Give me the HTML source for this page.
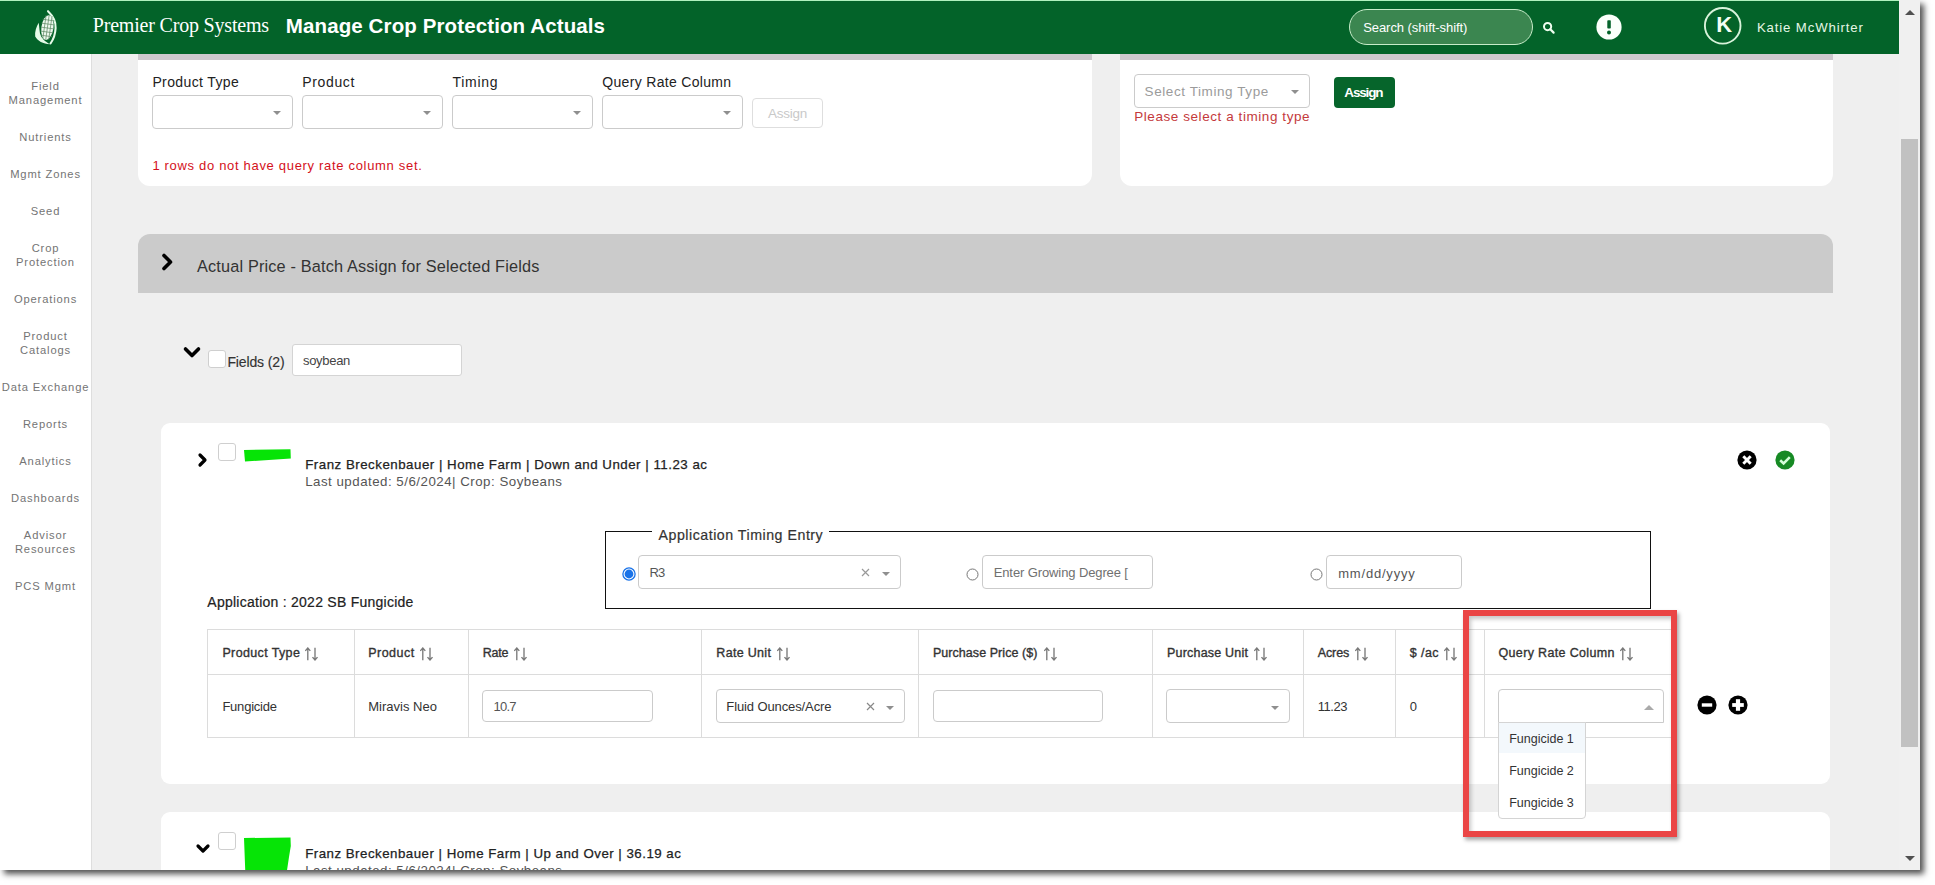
<!DOCTYPE html>
<html><head><meta charset="utf-8">
<style>
*{box-sizing:border-box;margin:0;padding:0}
html,body{width:1935px;height:885px;overflow:hidden;background:#fff;font-family:"Liberation Sans",sans-serif;color:#333}
.a{position:absolute}
.t{position:absolute;white-space:nowrap}
#shot{position:absolute;left:0;top:0;width:1920px;height:870px;background:#efefef;overflow:hidden}
#shadow{position:absolute;left:0;top:0;width:1920px;height:870px;box-shadow:4px 4px 6px rgba(0,0,0,.68)}
.card{position:absolute;background:#fff}
.sel{position:absolute;border:1px solid #cbcbcb;border-radius:4px;background:#fff}
.caret{position:absolute;width:0;height:0;border-left:4px solid transparent;border-right:4px solid transparent;border-top:4px solid #8f8f8f;margin-left:1px;margin-top:1px}
.cb{position:absolute;width:18px;height:18px;border:1px solid #cfcfcf;border-radius:3px;background:#fff}
.vl{position:absolute;top:629px;width:1px;height:109px;background:#dcdcdc}
</style></head><body>
<div id="shadow"></div>
<div id="shot">
  <!-- header -->
  <div class="a" style="left:0;top:0;width:1899px;height:54px;background:#036329;border-top:1px solid #b0f2bf"></div>
  <!-- logo -->
  <svg class="a" style="left:30px;top:8px" width="32" height="40" viewBox="0 0 32 40">
    <path d="M18 3.2 C23 8 26 14 25.6 20 C25.3 27 23 32 20.5 35.5" fill="none" stroke="#e6fbe8" stroke-width="2.1" stroke-linecap="round"/>
    <g transform="rotate(8 17.4 19.6)"><ellipse cx="17.4" cy="19.6" rx="6" ry="12.4" fill="#eef9ef"/>
    <path d="M11.5 12 H23.3 M11 16 H23.8 M11 20 H23.8 M11 24 H23.8 M11.5 28 H23.3 M14.4 7.5 V31.5 M17.4 7.2 V32 M20.4 7.5 V31.5" stroke="#5f8a66" stroke-width="0.7"/></g>
    <path d="M8.7 14.8 C6.2 19 4.6 24 5.2 28.5 C7.5 33 13 35.8 20 36.2 C15 33.5 11.5 30.5 10 25.5 C9.4 22 9.2 18 8.7 14.8 Z" fill="#e6fbe8"/>
  </svg>
  <div class="a" style="left:1349px;top:9px;width:184px;height:36px;border:1.5px solid #c7ecc9;border-radius:18px;background:#3b8650"></div>
  <svg class="a" style="left:1540px;top:19px" width="16" height="16" viewBox="0 0 16 16"><circle cx="7.6" cy="7.6" r="3.6" fill="none" stroke="#f0fff0" stroke-width="2"/><path d="M10.3 10.3 L13.6 13.6" stroke="#f0fff0" stroke-width="2.2" stroke-linecap="round"/></svg>
  <svg class="a" style="left:1596px;top:14px" width="26" height="26" viewBox="0 0 26 26"><circle cx="13" cy="13" r="12.6" fill="#fbfffb"/><rect x="11.3" y="6.2" width="3.5" height="8.3" rx="0.8" fill="#036329"/><circle cx="13" cy="18.4" r="2" fill="#036329"/></svg>
  <svg class="a" style="left:1702px;top:5px" width="42" height="42" viewBox="0 0 42 42"><circle cx="20.7" cy="20.8" r="17.8" fill="none" stroke="#d8f3da" stroke-width="1.9"/></svg>

  <!-- sidebar -->
  <div class="a" style="left:0;top:54px;width:91px;height:816px;background:#fff"></div>
  <div class="a" style="left:91px;top:54px;width:1px;height:816px;background:#dedede"></div>

  <!-- top card 1 -->
  <div class="card" style="left:138px;top:54px;width:954px;height:132px;border-radius:0 0 12px 12px;border-top:6px solid #cdc9ce"></div>
  <div class="sel" style="left:152px;top:95px;width:141px;height:34px"><div class="caret" style="left:119px;top:14px"></div></div>
  <div class="sel" style="left:302px;top:95px;width:141px;height:34px"><div class="caret" style="left:119px;top:14px"></div></div>
  <div class="sel" style="left:452px;top:95px;width:141px;height:34px"><div class="caret" style="left:119px;top:14px"></div></div>
  <div class="sel" style="left:602px;top:95px;width:141px;height:34px"><div class="caret" style="left:119px;top:14px"></div></div>
  <div class="a" style="left:752px;top:98px;width:71px;height:30px;border:1px solid #dedede;border-radius:4px"></div>

  <!-- top card 2 -->
  <div class="card" style="left:1120px;top:54px;width:713px;height:132px;border-radius:0 0 12px 12px;border-top:6px solid #cdc9ce"></div>
  <div class="sel" style="left:1134px;top:74px;width:176px;height:34px"><div class="caret" style="left:155px;top:14px"></div></div>
  <div class="a" style="left:1334px;top:77px;width:61px;height:31px;background:#06652b;border-radius:4px"></div>

  <!-- accordion -->
  <div class="a" style="left:138px;top:234px;width:1695px;height:59px;background:#cbcbcb;border-radius:12px 12px 0 0"></div>
  <svg class="a" style="left:158px;top:250px" width="20" height="24" viewBox="0 0 20 24"><path d="M6 5.5 L12.5 12 L6 18.5" fill="none" stroke="#000" stroke-width="3.6" stroke-linecap="round" stroke-linejoin="round"/></svg>

  <!-- fields row -->
  <svg class="a" style="left:180px;top:342px" width="24" height="20" viewBox="0 0 24 20"><path d="M5.5 7 L12 13.5 L18.5 7" fill="none" stroke="#000" stroke-width="3.6" stroke-linecap="round" stroke-linejoin="round"/></svg>
  <div class="cb" style="left:208px;top:350px"></div>
  <div class="a" style="left:292px;top:344px;width:170px;height:32px;border:1px solid #d4d4d4;border-radius:3px;background:#fff"></div>

  <!-- field card 1 -->
  <div class="card" style="left:161px;top:423px;width:1669px;height:361px;border-radius:9px"></div>
  <svg class="a" style="left:193px;top:449px" width="20" height="22" viewBox="0 0 20 22"><path d="M7 6 L12 11 L7 16" fill="none" stroke="#000" stroke-width="3.2" stroke-linecap="round" stroke-linejoin="round"/></svg>
  <div class="cb" style="left:218px;top:443px"></div>
  <svg class="a" style="left:243px;top:449px" width="50" height="14"><path d="M1 1 L47.5 0.2 L47.8 9.5 L2 12.5 Z" fill="#06e406"/></svg>
  <svg class="a" style="left:1737px;top:450px" width="20" height="20" viewBox="0 0 20 20"><circle cx="10" cy="10" r="9.6" fill="#000"/><path d="M6.3 6.3 L13.7 13.7 M13.7 6.3 L6.3 13.7" stroke="#fff" stroke-width="2.9"/></svg>
  <svg class="a" style="left:1775px;top:450px" width="20" height="20" viewBox="0 0 20 20"><circle cx="10" cy="10" r="9.6" fill="#168a24"/><path d="M5.2 10.2 L8.6 13.4 L14.8 7.2" fill="none" stroke="#d4ffd8" stroke-width="2.6"/></svg>

  <!-- fieldset -->
  <div class="a" style="left:605px;top:531px;width:1046px;height:78px;border:1.5px solid #111"></div>
  <div class="a" style="left:652px;top:525px;width:177px;height:12px;background:#fff"></div>
  <svg class="a" style="left:622px;top:567px" width="14" height="14" viewBox="0 0 14 14"><circle cx="7" cy="7" r="6.1" fill="#fff" stroke="#1a73e8" stroke-width="1.3"/><circle cx="7" cy="7" r="4.4" fill="#1a73e8"/></svg>
  <div class="sel" style="left:638px;top:555px;width:263px;height:34px"><div class="caret" style="left:242px;top:15px"></div></div>
  <svg class="a" style="left:860px;top:567px" width="11" height="11" viewBox="0 0 11 11"><path d="M2 2 L9 9 M9 2 L2 9" stroke="#999" stroke-width="1.2"/></svg>
  <svg class="a" style="left:966px;top:568px" width="13" height="13" viewBox="0 0 13 13"><circle cx="6.5" cy="6.5" r="5.5" fill="#fff" stroke="#777" stroke-width="1"/></svg>
  <div class="sel" style="left:982px;top:555px;width:171px;height:34px"></div>
  <svg class="a" style="left:1310px;top:568px" width="13" height="13" viewBox="0 0 13 13"><circle cx="6.5" cy="6.5" r="5.5" fill="#fff" stroke="#777" stroke-width="1"/></svg>
  <div class="sel" style="left:1326px;top:555px;width:136px;height:34px"></div>

  <!-- table -->
  <div class="a" style="left:207px;top:629px;width:1470px;height:109px;border:1px solid #dcdcdc"></div>
  <div class="a" style="left:207px;top:674px;width:1470px;height:1px;background:#dcdcdc"></div>
  <div class="vl" style="left:354px"></div>
  <div class="vl" style="left:468px"></div>
  <div class="vl" style="left:701px"></div>
  <div class="vl" style="left:918px"></div>
  <div class="vl" style="left:1152px"></div>
  <div class="vl" style="left:1303px"></div>
  <div class="vl" style="left:1395px"></div>
  <div class="vl" style="left:1484px"></div>
  <svg class="a" style="left:305.2px;top:646.5px" width="14" height="14" viewBox="0 0 14 14"><path d="M2.8 13.3 V1.3 M0.3 3.9 L2.8 1 L5.3 3.9 M10 0.7 V12.7 M7.5 10.1 L10 13 L12.5 10.1" fill="none" stroke="#7a7a7a" stroke-width="1.35"/></svg>
  <svg class="a" style="left:420.2px;top:646.5px" width="14" height="14" viewBox="0 0 14 14"><path d="M2.8 13.3 V1.3 M0.3 3.9 L2.8 1 L5.3 3.9 M10 0.7 V12.7 M7.5 10.1 L10 13 L12.5 10.1" fill="none" stroke="#7a7a7a" stroke-width="1.35"/></svg>
  <svg class="a" style="left:514.2px;top:646.5px" width="14" height="14" viewBox="0 0 14 14"><path d="M2.8 13.3 V1.3 M0.3 3.9 L2.8 1 L5.3 3.9 M10 0.7 V12.7 M7.5 10.1 L10 13 L12.5 10.1" fill="none" stroke="#7a7a7a" stroke-width="1.35"/></svg>
  <svg class="a" style="left:776.5px;top:646.5px" width="14" height="14" viewBox="0 0 14 14"><path d="M2.8 13.3 V1.3 M0.3 3.9 L2.8 1 L5.3 3.9 M10 0.7 V12.7 M7.5 10.1 L10 13 L12.5 10.1" fill="none" stroke="#7a7a7a" stroke-width="1.35"/></svg>
  <svg class="a" style="left:1044.2px;top:646.5px" width="14" height="14" viewBox="0 0 14 14"><path d="M2.8 13.3 V1.3 M0.3 3.9 L2.8 1 L5.3 3.9 M10 0.7 V12.7 M7.5 10.1 L10 13 L12.5 10.1" fill="none" stroke="#7a7a7a" stroke-width="1.35"/></svg>
  <svg class="a" style="left:1254.2px;top:646.5px" width="14" height="14" viewBox="0 0 14 14"><path d="M2.8 13.3 V1.3 M0.3 3.9 L2.8 1 L5.3 3.9 M10 0.7 V12.7 M7.5 10.1 L10 13 L12.5 10.1" fill="none" stroke="#7a7a7a" stroke-width="1.35"/></svg>
  <svg class="a" style="left:1355.1px;top:646.5px" width="14" height="14" viewBox="0 0 14 14"><path d="M2.8 13.3 V1.3 M0.3 3.9 L2.8 1 L5.3 3.9 M10 0.7 V12.7 M7.5 10.1 L10 13 L12.5 10.1" fill="none" stroke="#7a7a7a" stroke-width="1.35"/></svg>
  <svg class="a" style="left:1444.4px;top:646.5px" width="14" height="14" viewBox="0 0 14 14"><path d="M2.8 13.3 V1.3 M0.3 3.9 L2.8 1 L5.3 3.9 M10 0.7 V12.7 M7.5 10.1 L10 13 L12.5 10.1" fill="none" stroke="#7a7a7a" stroke-width="1.35"/></svg>
  <svg class="a" style="left:1620.2px;top:646.5px" width="14" height="14" viewBox="0 0 14 14"><path d="M2.8 13.3 V1.3 M0.3 3.9 L2.8 1 L5.3 3.9 M10 0.7 V12.7 M7.5 10.1 L10 13 L12.5 10.1" fill="none" stroke="#7a7a7a" stroke-width="1.35"/></svg>
  <div class="sel" style="left:482px;top:690px;width:171px;height:32px"></div>
  <div class="sel" style="left:716px;top:689px;width:189px;height:34px"><div class="caret" style="left:168px;top:15px"></div></div>
  <svg class="a" style="left:865px;top:701px" width="11" height="11" viewBox="0 0 11 11"><path d="M2 2 L9 9 M9 2 L2 9" stroke="#888" stroke-width="1.2"/></svg>
  <div class="sel" style="left:933px;top:690px;width:170px;height:32px"></div>
  <div class="sel" style="left:1166px;top:689px;width:124px;height:34px"><div class="caret" style="left:103px;top:15px"></div></div>
  <div class="sel" style="left:1498px;top:689px;width:166px;height:34px;border-radius:4px 4px 0 0"><div class="a" style="left:145px;top:15px;width:0;height:0;border-left:5px solid transparent;border-right:5px solid transparent;border-bottom:5px solid #aaa"></div></div>
  <svg class="a" style="left:1697px;top:695px" width="20" height="20" viewBox="0 0 20 20"><circle cx="10" cy="10" r="9.6" fill="#000"/><rect x="4.8" y="8.3" width="10.4" height="3.4" fill="#fff"/></svg>
  <svg class="a" style="left:1728px;top:695px" width="20" height="20" viewBox="0 0 20 20"><circle cx="10" cy="10" r="9.6" fill="#000"/><rect x="4.2" y="8.1" width="11.6" height="3.8" fill="#fff"/><rect x="7.9" y="4.2" width="4.2" height="11.6" fill="#fff"/></svg>

  <!-- field card 2 -->
  <div class="card" style="left:161px;top:812px;width:1669px;height:100px;border-radius:9px"></div>
  <svg class="a" style="left:192px;top:839.5px" width="22" height="18" viewBox="0 0 22 18"><path d="M6 6 L11 11 L16 6" fill="none" stroke="#000" stroke-width="3.2" stroke-linecap="round" stroke-linejoin="round"/></svg>
  <div class="cb" style="left:218px;top:832px"></div>
  <svg class="a" style="left:243px;top:837px" width="50" height="40"><path d="M1 1 L47.5 0.5 L47.8 9 L46 20 L43 40 L2.5 40 Z" fill="#06e406"/></svg>

  <!-- dropdown -->
  <div class="a" style="left:1498px;top:722px;width:88px;height:97px;background:#fff;border:1px solid #d4d4d4;border-radius:0 0 4px 4px"></div>
  <div class="a" style="left:1499px;top:723px;width:86px;height:30px;background:#f3f8fc"></div>

  <div class="t" id="t0" style="left:92.80px;top:14.90px;font-size:20px;line-height:20px;letter-spacing:-0.195px;font-family:'Liberation Serif',serif;color:#fff">Premier Crop Systems</div>
<div class="t" id="t1" style="left:285.80px;top:15.78px;font-size:20.5px;line-height:20.5px;letter-spacing:0.114px;font-weight:bold;color:#fff">Manage Crop Protection Actuals</div>
<div class="t" id="t2" style="left:1363.20px;top:21.35px;font-size:13px;line-height:13px;letter-spacing:-0.068px;color:#fff">Search (shift-shift)</div>
<div class="t" id="t3" style="left:1716.20px;top:14.30px;font-size:22px;line-height:22px;letter-spacing:0.000px;font-weight:bold;color:#f4fff4">K</div>
<div class="t" id="t4" style="left:1756.90px;top:20.58px;font-size:13.2px;line-height:13.2px;letter-spacing:0.872px;color:#e6f7e6">Katie McWhirter</div>
<div class="t" id="t5" style="left:0;width:91px;text-align:center;top:81.38px;font-size:11.2px;line-height:11.2px;letter-spacing:0.851px;color:#747474">Field</div>
<div class="t" id="t6" style="left:0;width:91px;text-align:center;top:95.38px;font-size:11.2px;line-height:11.2px;letter-spacing:0.851px;color:#747474">Management</div>
<div class="t" id="t7" style="left:0;width:91px;text-align:center;top:132.28px;font-size:11.2px;line-height:11.2px;letter-spacing:0.851px;color:#747474">Nutrients</div>
<div class="t" id="t8" style="left:0;width:91px;text-align:center;top:169.38px;font-size:11.2px;line-height:11.2px;letter-spacing:0.851px;color:#747474">Mgmt Zones</div>
<div class="t" id="t9" style="left:0;width:91px;text-align:center;top:206.38px;font-size:11.2px;line-height:11.2px;letter-spacing:0.851px;color:#747474">Seed</div>
<div class="t" id="t10" style="left:0;width:91px;text-align:center;top:243.28px;font-size:11.2px;line-height:11.2px;letter-spacing:0.851px;color:#747474">Crop</div>
<div class="t" id="t11" style="left:0;width:91px;text-align:center;top:257.38px;font-size:11.2px;line-height:11.2px;letter-spacing:0.851px;color:#747474">Protection</div>
<div class="t" id="t12" style="left:0;width:91px;text-align:center;top:294.38px;font-size:11.2px;line-height:11.2px;letter-spacing:0.851px;color:#747474">Operations</div>
<div class="t" id="t13" style="left:0;width:91px;text-align:center;top:331.38px;font-size:11.2px;line-height:11.2px;letter-spacing:0.851px;color:#747474">Product</div>
<div class="t" id="t14" style="left:0;width:91px;text-align:center;top:345.38px;font-size:11.2px;line-height:11.2px;letter-spacing:0.851px;color:#747474">Catalogs</div>
<div class="t" id="t15" style="left:0;width:91px;text-align:center;top:382.38px;font-size:11.2px;line-height:11.2px;letter-spacing:0.851px;color:#747474">Data Exchange</div>
<div class="t" id="t16" style="left:0;width:91px;text-align:center;top:419.38px;font-size:11.2px;line-height:11.2px;letter-spacing:0.851px;color:#747474">Reports</div>
<div class="t" id="t17" style="left:0;width:91px;text-align:center;top:456.38px;font-size:11.2px;line-height:11.2px;letter-spacing:0.851px;color:#747474">Analytics</div>
<div class="t" id="t18" style="left:0;width:91px;text-align:center;top:493.38px;font-size:11.2px;line-height:11.2px;letter-spacing:0.851px;color:#747474">Dashboards</div>
<div class="t" id="t19" style="left:0;width:91px;text-align:center;top:530.38px;font-size:11.2px;line-height:11.2px;letter-spacing:0.851px;color:#747474">Advisor</div>
<div class="t" id="t20" style="left:0;width:91px;text-align:center;top:544.38px;font-size:11.2px;line-height:11.2px;letter-spacing:0.851px;color:#747474">Resources</div>
<div class="t" id="t21" style="left:0;width:91px;text-align:center;top:581.38px;font-size:11.2px;line-height:11.2px;letter-spacing:0.851px;color:#747474">PCS Mgmt</div>
<div class="t" id="t22" style="left:152.40px;top:75.40px;font-size:14px;line-height:14px;letter-spacing:0.377px;color:#222">Product Type</div>
<div class="t" id="t23" style="left:302.30px;top:75.40px;font-size:14px;line-height:14px;letter-spacing:0.642px;color:#222">Product</div>
<div class="t" id="t24" style="left:452.50px;top:75.40px;font-size:14px;line-height:14px;letter-spacing:0.720px;color:#222">Timing</div>
<div class="t" id="t25" style="left:602.30px;top:75.40px;font-size:14px;line-height:14px;letter-spacing:0.318px;color:#222">Query Rate Column</div>
<div class="t" id="t26" style="left:768.10px;top:106.53px;font-size:13.5px;line-height:13.5px;letter-spacing:-0.286px;color:#c9c9c9">Assign</div>
<div class="t" id="t27" style="left:152.40px;top:158.95px;font-size:13px;line-height:13px;letter-spacing:0.683px;color:#d4111b">1 rows do not have query rate column set.</div>
<div class="t" id="t28" style="left:1144.60px;top:84.53px;font-size:13.5px;line-height:13.5px;letter-spacing:0.582px;color:#9b9b9b">Select Timing Type</div>
<div class="t" id="t29" style="left:1134.20px;top:109.62px;font-size:13.5px;line-height:13.5px;letter-spacing:0.569px;color:#c43a3c">Please select a timing type</div>
<div class="t" id="t30" style="left:1344.30px;top:85.62px;font-size:13.5px;line-height:13.5px;letter-spacing:-1.163px;font-weight:bold;color:#fff">Assign</div>
<div class="t" id="t31" style="left:197.00px;top:258.44px;font-size:16.3px;line-height:16.3px;letter-spacing:0.162px;color:#333">Actual Price - Batch Assign for Selected Fields</div>
<div class="t" id="t32" style="left:227.40px;top:354.60px;font-size:14px;line-height:14px;letter-spacing:-0.129px;color:#333;-webkit-text-stroke:0.15px #333">Fields (2)</div>
<div class="t" id="t33" style="left:303.00px;top:354.25px;font-size:13px;line-height:13px;letter-spacing:-0.309px;color:#444">soybean</div>
<div class="t" id="t34" style="left:305.20px;top:458.00px;font-size:13.3px;line-height:13.3px;letter-spacing:0.505px;color:#222;-webkit-text-stroke:0.25px #222">Franz Breckenbauer | Home Farm | Down and Under | 11.23 ac</div>
<div class="t" id="t35" style="left:305.20px;top:474.69px;font-size:13.3px;line-height:13.3px;letter-spacing:0.493px;color:#555">Last updated: 5/6/2024| Crop: Soybeans</div>
<div class="t" id="t36" style="left:658.50px;top:527.83px;font-size:14.2px;line-height:14.2px;letter-spacing:0.522px;color:#333;-webkit-text-stroke:0.2px #333">Application Timing Entry</div>
<div class="t" id="t37" style="left:649.60px;top:566.15px;font-size:13px;line-height:13px;letter-spacing:-0.925px;color:#555">R3</div>
<div class="t" id="t38" style="left:993.70px;top:565.95px;font-size:13px;line-height:13px;letter-spacing:-0.108px;color:#707070">Enter Growing Degree [</div>
<div class="t" id="t39" style="left:1338.20px;top:566.75px;font-size:13px;line-height:13px;letter-spacing:0.806px;color:#555">mm/dd/yyyy</div>
<div class="t" id="t40" style="left:207.30px;top:594.50px;font-size:14px;line-height:14px;letter-spacing:0.254px;color:#222;-webkit-text-stroke:0.2px #222">Application : 2022 SB Fungicide</div>
<div class="t" id="t41" style="left:222.40px;top:646.98px;font-size:12.5px;line-height:12.5px;letter-spacing:0.369px;color:#333;-webkit-text-stroke:0.35px #333">Product Type</div>
<div class="t" id="t42" style="left:368.20px;top:646.98px;font-size:12.5px;line-height:12.5px;letter-spacing:0.484px;color:#333;-webkit-text-stroke:0.35px #333">Product</div>
<div class="t" id="t43" style="left:482.80px;top:646.98px;font-size:12.5px;line-height:12.5px;letter-spacing:-0.269px;color:#333;-webkit-text-stroke:0.35px #333">Rate</div>
<div class="t" id="t44" style="left:716.30px;top:646.98px;font-size:12.5px;line-height:12.5px;letter-spacing:0.311px;color:#333;-webkit-text-stroke:0.35px #333">Rate Unit</div>
<div class="t" id="t45" style="left:932.90px;top:646.98px;font-size:12.5px;line-height:12.5px;letter-spacing:0.058px;color:#333;-webkit-text-stroke:0.35px #333">Purchase Price ($)</div>
<div class="t" id="t46" style="left:1167.00px;top:646.98px;font-size:12.5px;line-height:12.5px;letter-spacing:0.199px;color:#333;-webkit-text-stroke:0.35px #333">Purchase Unit</div>
<div class="t" id="t47" style="left:1317.70px;top:646.98px;font-size:12.5px;line-height:12.5px;letter-spacing:-0.088px;color:#333;-webkit-text-stroke:0.35px #333">Acres</div>
<div class="t" id="t48" style="left:1409.80px;top:646.98px;font-size:12.5px;line-height:12.5px;letter-spacing:0.423px;color:#333;-webkit-text-stroke:0.35px #333">$ /ac</div>
<div class="t" id="t49" style="left:1498.50px;top:646.98px;font-size:12.5px;line-height:12.5px;letter-spacing:0.346px;color:#333;-webkit-text-stroke:0.35px #333">Query Rate Column</div>
<div class="t" id="t50" style="left:222.40px;top:699.85px;font-size:13px;line-height:13px;letter-spacing:-0.222px;color:#333">Fungicide</div>
<div class="t" id="t51" style="left:368.20px;top:699.85px;font-size:13px;line-height:13px;letter-spacing:0.018px;color:#333">Miravis Neo</div>
<div class="t" id="t52" style="left:493.50px;top:699.85px;font-size:13px;line-height:13px;letter-spacing:-0.737px;color:#555">10.7</div>
<div class="t" id="t53" style="left:726.30px;top:699.85px;font-size:13px;line-height:13px;letter-spacing:-0.109px;color:#333">Fluid Ounces/Acre</div>
<div class="t" id="t54" style="left:1317.70px;top:699.85px;font-size:13px;line-height:13px;letter-spacing:-0.470px;color:#333">11.23</div>
<div class="t" id="t55" style="left:1409.80px;top:699.85px;font-size:13px;line-height:13px;letter-spacing:0.000px;color:#333">0</div>
<div class="t" id="t56" style="left:1509.20px;top:732.98px;font-size:12.5px;line-height:12.5px;letter-spacing:-0.003px;color:#333">Fungicide 1</div>
<div class="t" id="t57" style="left:1509.20px;top:764.98px;font-size:12.5px;line-height:12.5px;letter-spacing:-0.003px;color:#333">Fungicide 2</div>
<div class="t" id="t58" style="left:1509.20px;top:796.98px;font-size:12.5px;line-height:12.5px;letter-spacing:-0.003px;color:#333">Fungicide 3</div>
<div class="t" id="t59" style="left:305.20px;top:847.00px;font-size:13.3px;line-height:13.3px;letter-spacing:0.483px;color:#222;-webkit-text-stroke:0.25px #222">Franz Breckenbauer | Home Farm | Up and Over | 36.19 ac</div>
<div class="t" id="t60" style="left:305.20px;top:863.70px;font-size:13.3px;line-height:13.3px;letter-spacing:0.493px;color:#555">Last updated: 5/6/2024| Crop: Soybeans</div>

  <!-- red highlight -->
  <div class="a" style="left:1463px;top:610px;width:214px;height:227px;border:6px solid #ea4545;box-shadow:2px 3px 4px rgba(0,0,0,.35), inset 2px 3px 4px rgba(0,0,0,.22)"></div>

  <!-- scrollbar -->
  <div class="a" style="left:1899px;top:0;width:21px;height:870px;background:#f0f0f0"></div>
  <div class="a" style="left:1901px;top:139px;width:17px;height:608px;background:#c1c1c1"></div>
  <div class="a" style="left:1905px;top:10px;width:0;height:0;border-left:5px solid transparent;border-right:5px solid transparent;border-bottom:5px solid #505050"></div>
  <div class="a" style="left:1905px;top:856px;width:0;height:0;border-left:5px solid transparent;border-right:5px solid transparent;border-top:5px solid #505050"></div>
</div>
</body></html>
